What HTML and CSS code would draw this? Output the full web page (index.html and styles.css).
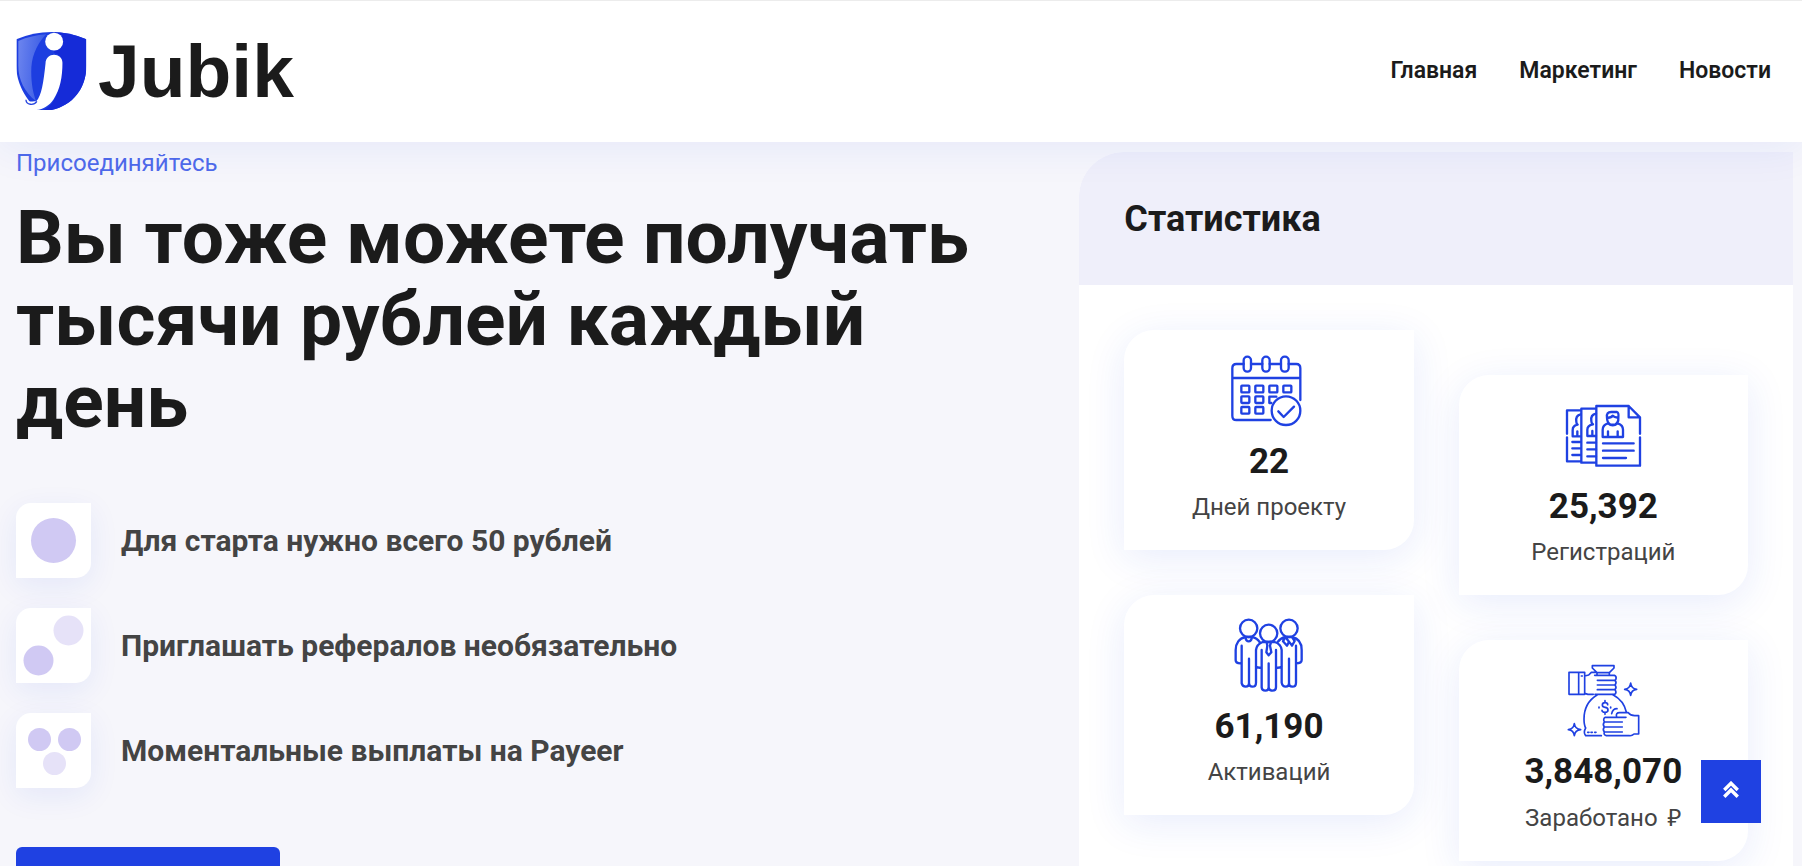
FILE: index.html
```html
<!DOCTYPE html>
<html lang="ru">
<head>
<meta charset="utf-8">
<title>Jubik</title>
<link rel="stylesheet" href="styles.css">
</head>
<body>
<header class="header">
  <a class="logo" href="#">
    <svg class="logo-mark" viewBox="48 95 212 235" aria-hidden="true">
      <defs>
        <linearGradient id="shine" x1="0" y1="0.3" x2="1" y2="0.5">
          <stop offset="0" stop-color="#6a83ee"/>
          <stop offset="1" stop-color="#3557e4"/>
        </linearGradient>
        <clipPath id="shield"><path d="M48 117Q100 95 154 95Q208 95 259 117V196C259 265 218 316 154 330H108C80 296 48 256 48 196Z"/></clipPath>
      </defs>
      <g clip-path="url(#shield)">
        <path fill="#1d3ee0" d="M48 95h212v235H48z"/>
        <path fill="url(#shine)" d="M54 122Q94 105 138 102C104 138 93 176 93 215C93 252 99 282 108 304C72 276 54 238 54 196Z"/>
        <path fill="#152bd8" d="M162 95H260V330H130C170 310 178 270 184 190Q184 160 162 158Z"/>
      </g>
      <circle fill="#fff" cx="162" cy="124" r="27"/>
      <path fill="#fff" d="M136 190C136 154 187 156 187 188C187 230 180 270 160 298C147 317 130 327 108 330H88L72 300C88 306 100 304 108 304C124 288 130 246 136 190Z"/>
      <path fill="none" stroke="#2443df" stroke-width="4" d="M77 299C78 315 100 318 110 304"/>
    </svg>
    <span class="logo-text">Jubik</span>
  </a>
  <nav class="nav">
    <a href="#">Главная</a>
    <a href="#">Маркетинг</a>
    <a href="#">Новости</a>
  </nav>
</header>

<main class="hero">
  <section class="intro">
    <p class="eyebrow">Присоединяйтесь</p>
    <h1 class="title">Вы тоже можете получать тысячи рублей каждый день</h1>
    <ul class="features">
      <li class="feature">
        <span class="tile"><svg viewBox="0 0 75 75" aria-hidden="true"><circle class="dot" cx="37.500" cy="37.500" r="22.500"/></svg></span>
        <span>Для старта нужно всего 50 рублей</span>
      </li>
      <li class="feature">
        <span class="tile"><svg viewBox="0 0 75 75" aria-hidden="true"><circle class="dot" cx="22.500" cy="52.500" r="15"/><circle class="dot dot-pale" cx="52.500" cy="22.500" r="15"/></svg></span>
        <span>Приглашать рефералов необязательно</span>
      </li>
      <li class="feature">
        <span class="tile"><svg viewBox="0 0 75 75" aria-hidden="true"><circle class="dot" cx="23.500" cy="26.500" r="11.500"/><circle class="dot" cx="53.500" cy="26.500" r="11.500"/><circle class="dot dot-pale" cx="38.500" cy="50.500" r="11.500"/></svg></span>
        <span>Моментальные выплаты на Payeer</span>
      </li>
    </ul>
    <button class="cta" type="button"></button>
  </section>

  <section class="stats">
    <h2 class="stats-title">Статистика</h2>
    <div class="stats-body">
      <div class="stats-col">
        <article class="card">
          <svg class="icon" viewBox="97 39 225 225" aria-hidden="true">
            <path d="M132 72H110Q98 72 98 85V227Q98 240 110 240H213M154 72H188M210 72H244M267 72H290Q302 72 302 85V180M98 114H302"/>
            <rect x="132" y="50" width="22" height="45" rx="11"/><rect x="188" y="50" width="22" height="45" rx="11"/><rect x="244" y="50" width="23" height="45" rx="11"/>
            <rect x="125" y="137" width="24" height="20" rx="2"/><rect x="167" y="137" width="24" height="20" rx="2"/><rect x="209" y="137" width="24" height="20" rx="2"/><rect x="251" y="137" width="24" height="20" rx="2"/>
            <rect x="125" y="169" width="24" height="20" rx="2"/><rect x="167" y="169" width="24" height="20" rx="2"/><path d="M230 170H209V189H215"/>
            <rect x="125" y="201" width="24" height="20" rx="2"/><rect x="167" y="201" width="24" height="20" rx="2"/>
            <circle cx="259" cy="212" r="43"/><path d="M236 214L252 231L283 200"/>
          </svg>
          <strong class="value">22</strong>
          <span class="label">Дней проекту</span>
        </article>
        <article class="card">
          <svg class="icon" viewBox="66 54 225 225" aria-hidden="true">
            <circle cx="116" cy="85" r="26"/><circle cx="237" cy="85" r="26"/><circle cx="176" cy="100" r="26"/>
            <path d="M150 128C143 117 133 112 126 111H106C88 115 77 130 77 150V181Q77 190 91 190M106 111Q108 124 116 124Q124 124 126 111M95 137V250Q97 260 107 260Q117 260 117 250V176M117 250Q118 260 127 260Q138 260 138 248V150Q140 133 158 126H194Q213 132 215 150V248Q217 260 227 260Q237 260 237 250V176M237 250Q237 260 247 260Q258 260 258 248V137M258 190Q275 190 275 180V150C275 130 265 115 246 111H226C216 113 208 119 203 126M226 111L219 124L231 137L237 125L246 137L254 123L246 111M237 125L226 111M138 200Q142 204 154 203M215 200Q211 204 199 203M155 150V262Q156 272 166 272Q176 272 176 262V190M176 262Q177 272 187 272Q198 272 198 262V150M170 127L172 137L169 157L176 166L184 157L180 137L183 127"/>
          </svg>
          <strong class="value">61,190</strong>
          <span class="label">Активаций</span>
        </article>
      </div>
      <div class="stats-col stats-col-low">
        <article class="card">
          <svg class="icon" viewBox="78 24 225 225" aria-hidden="true">
            <path d="M122 61H81V131M81 142V214H122M169 56H124V218H169M300 131V82L266 48H169V227H300V142M266 48V82H300"/>
            <path d="M188 141V119Q188 105 204 100Q218 112 233 100Q249 105 249 119V141ZM204 141V124M233 141V124M201 83Q198 65 215 66H231Q237 68 235 84Q236 98 225 104H212Q201 98 201 83Q214 84 218 77Q226 84 235 82"/>
            <path d="M122 73Q106 76 109 95Q109 101 113 104Q98 107 98 120V139H122M112 139V124M168 71Q151 74 154 93Q154 100 159 103Q142 106 142 119V138H168M157 138V123M97 156H121M97 175H121M97 195H121M142 158H168M142 178H168M142 199H168M189 160H281M189 182H281M189 204H258"/>
          </svg>
          <strong class="value">25,392</strong>
          <span class="label">Регистраций</span>
        </article>
        <article class="card">
          <svg class="icon icon-thin" viewBox="48 39 225 225" aria-hidden="true">
            <path d="M127 47H192V54L178 68V75M127 47V54L141 68H178M141 68V75M57 67H104V133H57ZM86 67V133M104 78L116 75L124 67H139M104 130L114 133H130M134 76H193Q200 79 198 87L195 91Q201 97 195 105Q201 112 195 119Q201 128 194 133H135M142 91H195M142 105H195M142 119H195"/>
            <path d="M141 135C115 151 102 176 102 207Q102 225 107 234Q99 248 107 257H154M189 134C211 146 224 163 229 186M200 201Q196 188 209 188H235Q242 197 254 197H266V252H252Q246 258 238 257H169Q160 255 163 246Q157 238 163 231Q157 223 163 216Q158 206 166 202H228M163 216H217M163 231H217M163 246H217M185 191Q188 176 201 176"/>
            <path d="M173 164Q173 158 165 158Q157 158 157 165Q157 171 165 172Q174 173 174 180Q174 187 165 187Q156 187 156 181M165 152V158M165 187V193M147 171V174M182 171V174M113 247H117M123 247H127M134 247H138M94 78H97M242 99Q244 116 260 118Q244 120 242 136Q240 120 224 118Q240 116 242 99ZM73 221Q75 237 92 239Q75 241 73 257Q71 241 55 239Q71 237 73 221Z"/>
          </svg>
          <strong class="value">3,848,070</strong>
          <span class="label">Заработано <span class="ruble">₽</span></span>
        </article>
      </div>
    </div>
  </section>
</main>

<button class="to-top" type="button" aria-label="Наверх">
  <svg viewBox="0 0 16 16" aria-hidden="true"><path d="M2 8L8 2L14 8M2 14L8 8L14 14"/></svg>
</button>
</body>
</html>
```
FILE: styles.css
```css
* {
  box-sizing: border-box;
  margin: 0;
  padding: 0;
}

body {
  display: flex;
  flex-direction: column;
  height: 100vh;
  overflow: hidden;
  background: #f6f6fb;
  color: #1b1b1b;
  font-family: Roboto, "Noto Sans", sans-serif;
}

.header {
  position: relative;
  z-index: 2;
  display: flex;
  flex: none;
  align-items: center;
  justify-content: space-between;
  padding: 31px 31px 32px 16px;
  border-top: 1px solid #ececec;
  background: #fff;
  box-shadow: 0 5px 40px rgba(31, 65, 226, 0.08);
}

.logo {
  display: flex;
  align-items: center;
  gap: 11px;
  color: #1b1b1b;
  text-decoration: none;
}

.logo-mark {
  width: 71px;
  height: 78px;
}

.logo-text {
  font-family: "Liberation Sans", Arial, sans-serif;
  font-size: 75px;
  font-weight: 700;
  line-height: 78px;
}

.nav {
  display: flex;
  gap: 42px;
}

.nav a {
  color: #1b1b1b;
  font-size: 23px;
  font-weight: 600;
  line-height: 30px;
  text-decoration: none;
}

.hero {
  display: grid;
  flex: none;
  grid-template-columns: minmax(0, 1.49fr) minmax(0, 1fr);
  padding: 10px 9px 0 16px;
}

.intro {
  padding-right: 30px;
}

.eyebrow {
  margin-bottom: 22px;
  color: #4f6aea;
  font-size: 24px;
  font-weight: 400;
  line-height: 22px;
}

.title {
  margin-bottom: 61px;
  font-size: 75px;
  font-weight: 700;
  line-height: 82px;
}

.features {
  display: grid;
  gap: 30px;
  margin-bottom: 59px;
  list-style: none;
}

.feature {
  display: flex;
  align-items: center;
  gap: 30px;
  color: #444;
  font-size: 30px;
  font-weight: 700;
  line-height: 34px;
}

.tile {
  width: 75px;
  height: 75px;
  border-radius: 15px 0;
  background: #fff;
  box-shadow: 0 8px 30px rgba(31, 65, 226, 0.08);
}

.tile svg {
  display: block;
}

.dot {
  fill: #d0c9f3;
}

.dot-pale {
  fill: #e6e2f8;
}

.cta {
  width: 264px;
  height: 66px;
  border: 0;
  border-radius: 6px;
  background: #1f41e2;
}

.stats {
  overflow: hidden;
  border-radius: 45px 0 0 0;
  background: #fff;
}

.stats-title {
  padding: 46px 45px 44px;
  background: #efeffa;
  font-size: 36px;
  font-weight: 700;
  line-height: 43px;
}

.stats-body {
  display: grid;
  grid-template-columns: 1fr 1fr;
  gap: 45px;
  padding: 45px;
}

.stats-col {
  display: grid;
  align-content: start;
  gap: 45px;
}

.stats-col-low {
  padding-top: 45px;
}

.card {
  display: flex;
  flex-direction: column;
  align-items: center;
  padding: 23px 15px 25px;
  border-radius: 30px 0;
  background: #fff;
  box-shadow: 0 8px 40px rgba(31, 65, 226, 0.1);
}

.icon {
  width: 75px;
  height: 75px;
  margin-bottom: 11px;
  overflow: visible;
  fill: none;
  stroke: #1f41e2;
  stroke-linecap: round;
  stroke-linejoin: round;
  stroke-width: 7;
}

.icon-thin {
  stroke-width: 5;
}

.value {
  margin-bottom: 4px;
  font-size: 35px;
  font-weight: 700;
  line-height: 46px;
}

.label {
  color: #444;
  font-size: 24px;
  line-height: 36px;
}

.ruble {
  margin-left: 4px;
  font-family: "Open Sans", "Noto Sans", sans-serif;
}

.to-top {
  position: fixed;
  right: 41px;
  bottom: 43px;
  z-index: 3;
  width: 60px;
  height: 63px;
  border: 0;
  background: #1f41e2;
}

.to-top svg {
  width: 18px;
  height: 18px;
  fill: none;
  stroke: #fff;
  stroke-width: 3;
}
```
